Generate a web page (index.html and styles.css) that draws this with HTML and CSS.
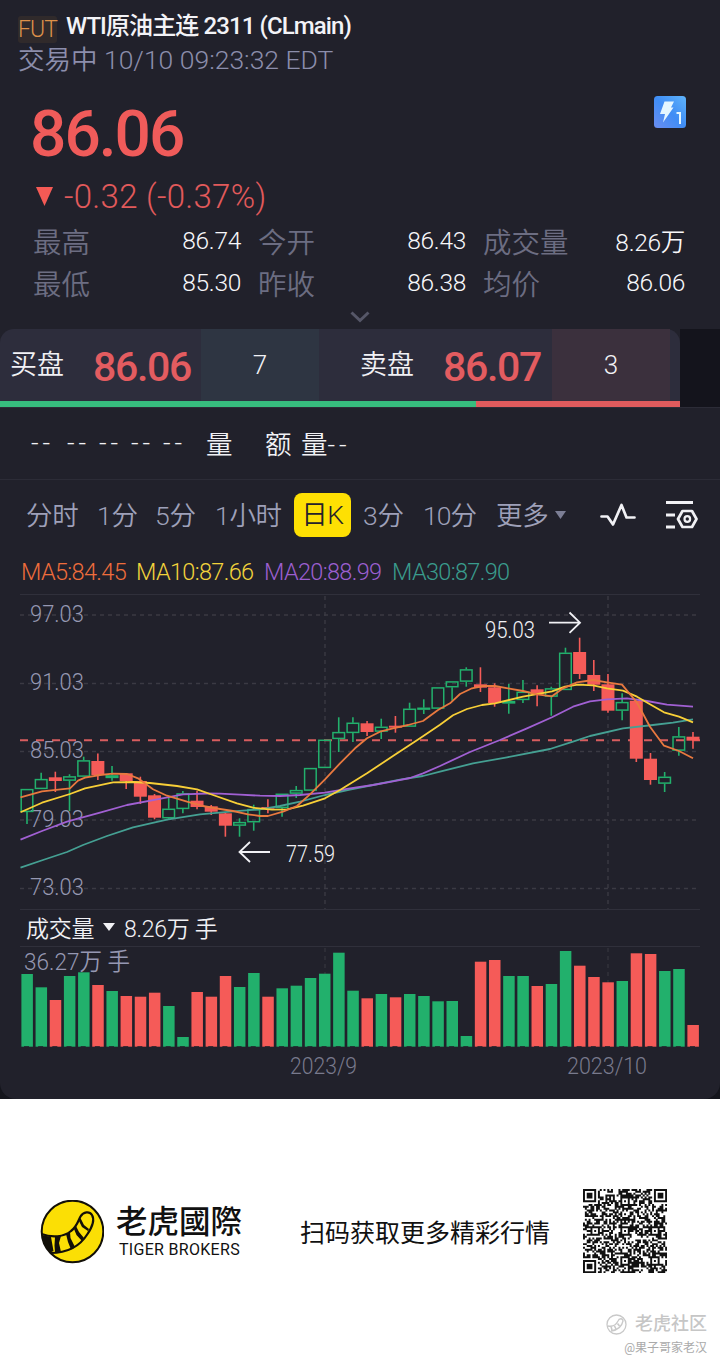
FILE: index.html
```html
<!DOCTYPE html>
<html lang="zh-CN">
<head>
  <meta charset="UTF-8">
  <title>WTI原油主连 2311 (CLmain)</title>
  <link rel="stylesheet" href="styles.css">
</head>
<body>

  <div class="panel-wrap">
  <div class="panel">

    <div class="header">
      <div class="title-row">
        <span class="tag">FUT</span>
        <h1>WTI原油主连 2311 (CLmain)</h1>
      </div>
      <div class="status">交易中 10/10 09:23:32 EDT</div>
    </div>

    <div class="quote">
      <div class="quote-top">
        <div class="price">86.06</div>
        <svg class="level-icon" viewBox="0 0 32 32" width="32" height="32">
          <defs>
            <linearGradient id="lv" x1="0" y1="1" x2="1" y2="0">
              <stop offset="0" stop-color="#6b8df0"/>
              <stop offset="0.5" stop-color="#3f8df5"/>
              <stop offset="1" stop-color="#5fb4fb"/>
            </linearGradient>
          </defs>
          <rect width="32" height="32" rx="3.5" fill="url(#lv)"/>
          <path d="M10.500 5.500h9.500l-3 6h2.500L9 26.500l2-8.500H6z" fill="#e4f6ff"/>
          <path d="M22.500 17H26v11" fill="none" stroke="#e4f6ff" stroke-width="2"/>
        </svg>
      </div>
      <div class="change">
        <svg width="17" height="19" viewBox="0 0 18 20"><path d="M0 0h18L9 20z" fill="#f55a55"/></svg>
        <span>-0.32 (-0.37%)</span>
      </div>
      <div class="stats">
        <div class="stat"><span>最高</span><b>86.74</b></div>
        <div class="stat"><span>今开</span><b>86.43</b></div>
        <div class="stat"><span>成交量</span><b>8.26万</b></div>
        <div class="stat"><span>最低</span><b>85.30</b></div>
        <div class="stat"><span>昨收</span><b>86.38</b></div>
        <div class="stat"><span>均价</span><b>86.06</b></div>
      </div>
      <svg class="chevron" width="20" height="12" viewBox="0 0 20 12"><path d="M1.500 1.500L10 9.500l8.500-8" fill="none" stroke="#565768" stroke-width="3"/></svg>
    </div>

    <div class="depth">
      <div class="book">
        <div class="sides">
          <div class="side bid">
            <span class="side-name">买盘</span>
            <span class="side-price">86.06</span>
            <span class="side-qty">7</span>
          </div>
          <div class="side ask">
            <span class="side-name">卖盘</span>
            <span class="side-price">86.07</span>
            <span class="side-qty">3</span>
          </div>
        </div>
        <div class="ratio"><div class="ratio-bid"></div><div class="ratio-ask"></div></div>
      </div>
    </div>

    <div class="ticks">
      <span class="first dash">--</span><span class="dash">--</span><span class="dash">--</span><span class="dash">--</span><span class="dash">--</span>
      <span class="vol">量</span><span class="amount">额</span><span>量<i class="dash">--</i></span>
    </div>

    <div class="tabs">
      <span class="tab t1">分时</span>
      <span class="tab t2">1分</span>
      <span class="tab t3">5分</span>
      <span class="tab t4">1小时</span>
      <span class="tab active">日K</span>
      <span class="tab t6">3分</span>
      <span class="tab t7">10分</span>
      <span class="tab t8">更多</span>
      <svg class="caret" width="11" height="8" viewBox="0 0 11 8"><path d="M0 0h11L5.500 8z" fill="#7c7e95"/></svg>
      <svg class="wave" width="36" height="26" viewBox="0 0 36 26"><path d="M1.500 14.500h6L13 22.500 21.500 3l5 12.500h8" fill="none" stroke="#f1f1f5" stroke-width="2.700" stroke-linejoin="round" stroke-linecap="round"/></svg>
      <svg class="settings" width="32" height="30" viewBox="0 0 32 30">
        <path d="M0 2.500h27M0 15h9M0 27h9" stroke="#f1f1f5" stroke-width="2.800" fill="none"/>
        <path d="M16.500 11h9.500l4.500 8-4.500 8h-9.500L12 19z" fill="none" stroke="#f1f1f5" stroke-width="2.700" stroke-linejoin="round"/>
        <circle cx="21.300" cy="19" r="2.800" fill="none" stroke="#f1f1f5" stroke-width="2.200"/>
      </svg>
    </div>

    <div class="averages">
      <span class="ma5">MA5:84.45</span>
      <span class="ma10">MA10:87.66</span>
      <span class="ma20">MA20:88.99</span>
      <span class="ma30">MA30:87.90</span>
    </div>

    <svg id="price-chart" class="price-chart" width="680" height="315" viewBox="20 594 680 315"></svg>

    <div class="volume-head">
      <span>成交量</span>
      <svg width="12" height="8" viewBox="0 0 12 8"><path d="M0 0h12L6 8z" fill="#f1f1f5"/></svg>
      <span>8.26万 手</span>
    </div>

    <svg id="volume-chart" class="volume-chart" width="680" height="140" viewBox="20 946 680 140"></svg>

  </div>
  </div>

  <div class="footer">
    <svg class="logo" width="64" height="64" viewBox="0 0 64 64">
      <circle cx="32.500" cy="31.500" r="30.800" fill="#fbdf05" stroke="#120f08" stroke-width="2"/>
      <path d="M1.500 34C12 38 24 37 31 31c6-4.500 7-10 9.500-14.500 3-5 9-5.500 11.500-1.500 3 5-.5 13-4.500 19C40 46 27 53 10.500 53" fill="none" stroke="#120f08" stroke-width="2.200"/>
      <path d="M2 35l9 2 2.500 14-3 1.500Q3 46 2 35zM15 37l6-1-2 7 2 9-6 .5-.5-7zM26 34l4-2 .5 6 4.500 9-4 2.500L28 42zM34 29l2-3 3 6 5 6-2 3-5.500-6zM39 21l1.500-3 3.500 7 5 4-1 2-6-4z" fill="#120f08"/>
    </svg>
    <div class="brand">
      <div class="brand-cn">老虎國際</div>
      <div class="brand-en">TIGER BROKERS</div>
    </div>
    <div class="scan">扫码获取更多精彩行情</div>
    <svg id="qr" class="qr" width="84" height="84" viewBox="0 0 45 45"></svg>
  </div>

  <div class="watermark">
    <div class="wm-top">
      <svg width="21" height="21" viewBox="0 0 21 21" fill="none" stroke="#c9c9c9">
        <circle cx="10.500" cy="10.500" r="9.500" stroke-width="1.300"/>
        <path d="M2 12c5 1 8-1 10-5 1-3 5-3 5 0-1 5-5 9-12 10" stroke-width="1.300"/>
        <path d="M5 12.500l1 3.500M8.500 12l1.500 3M11.500 9.500l2 2.500" stroke-width="1.600"/>
      </svg>
      <span>老虎社区</span>
    </div>
    <div class="wm-user">@果子哥家老汉</div>
  </div>

  <script src="chart.js"></script>
</body>
</html>
```

FILE: styles.css
```css
* {
  margin: 0;
  padding: 0;
  box-sizing: border-box;
}

body {
  width: 720px;
  height: 1364px;
  overflow: hidden;
  position: relative;
  background: #fff;
  font-family: Roboto, 'Noto Sans CJK SC', sans-serif;
  font-weight: 350;
  white-space: nowrap;
}

svg {
  display: block;
  flex: none;
}

.panel-wrap {
  background: #14151c;
}

.panel {
  height: 1099px;
  background: #21212b;
  border-radius: 0 0 16px 16px;
  overflow: hidden;
}

/* header */
.header {
  height: 90px;
  padding: 10px 18px 0;
}

.title-row {
  display: flex;
  align-items: center;
  height: 32px;
}

.tag {
  width: 39px;
  height: 27px;
  margin: 6px 9px 0 0;
  line-height: 28px;
  text-align: center;
  font-size: 23px;
  letter-spacing: -1px;
  color: #dd914a;
  background: #302a2b;
  border-radius: 3px;
}

h1 {
  font-size: 24px;
  line-height: 32px;
  font-weight: 500;
  letter-spacing: -0.9px;
  color: #f3f3f7;
}

.status {
  margin-top: 2px;
  font-size: 26.5px;
  line-height: 32px;
  color: #8c8eac;
}

/* quote */
.quote {
  height: 239px;
  padding: 5px 34px 0 33px;
}

.quote-top {
  display: flex;
  justify-content: space-between;
  height: 80px;
}

.price {
  margin-left: -3px;
  font-size: 64px;
  line-height: 79px;
  font-weight: 500;
  letter-spacing: -2px;
  color: #f05b5a;
}

.level-icon {
  margin-top: 1px;
}

.change {
  display: flex;
  align-items: center;
  gap: 11px;
  height: 43px;
  margin: 0 0 1px 3px;
  font-size: 33px;
  letter-spacing: 0.3px;
  color: #e25a5b;
}

.stats {
  display: grid;
  grid-template-columns: 208px 208px 202px;
  grid-auto-rows: 42px;
  column-gap: 17px;
}

.stat {
  display: flex;
  align-items: center;
  justify-content: space-between;
  color: #6c6d82;
  font-size: 28.5px;
}

.stat b {
  font-size: 24.5px;
  font-weight: 350;
  letter-spacing: -0.3px;
  color: #f8f8fb;
}

.chevron {
  margin: 8px auto 0;
  position: relative;
  left: 0.5px;
}

/* bid and ask */
.depth {
  height: 78px;
  background: #14141c;
}

.book {
  width: 680px;
  height: 78px;
  background: #21212b;
}

.sides {
  display: flex;
  height: 72px;
  background: #2d2d3c;
  border-radius: 14px 14px 0 0;
}

.side {
  display: flex;
  align-items: center;
  line-height: 72px;
}

.bid {
  width: 350px;
  padding-left: 10px;
}

.ask {
  padding-left: 10px;
}

.side-name {
  width: 83px;
  font-size: 27px;
  color: #f1f1f5;
}

.side-price {
  width: 108px;
  padding-top: 4px;
  font-size: 41px;
  font-weight: 500;
  letter-spacing: -1.3px;
  color: #e35c60;
}

.ask .side-price {
  width: 109px;
}

.side-qty {
  width: 118px;
  height: 72px;
  text-align: center;
  font-size: 26px;
  color: #f1f1f5;
  background: #2e3542;
}

.ask .side-qty {
  background: #3b303d;
}

.ratio {
  display: flex;
  height: 6px;
}

.ratio-bid {
  width: 476px;
  background: #37bd7e;
}

.ratio-ask {
  width: 204px;
  background: #e05b5d;
}

/* tick row */
.ticks {
  display: flex;
  align-items: center;
  height: 73px;
  padding: 0 0 3px 31px;
  border-top: 1px solid #2c2c37;
  border-bottom: 1px solid #2c2c37;
  font-size: 26.5px;
  color: #f1f1f5;
}

.dash {
  width: 32px;
  letter-spacing: 4px;
  font-style: normal;
}

.first {
  width: 36px;
}

.vol {
  width: 59px;
  margin-left: 11px;
}

.amount {
  width: 36px;
}

/* period tabs */
.tabs {
  display: flex;
  align-items: center;
  height: 70px;
  padding: 0 22px 0 26px;
  font-size: 26.5px;
  color: #9ea0b9;
}

.tab {
  padding-bottom: 3px;
  letter-spacing: -0.3px;
}

.t1 { width: 71px; }
.t2 { width: 58px; }
.t3 { width: 60px; }
.t4 { width: 79px; }
.t6 { width: 60px; margin-left: 12px; }
.t7 { width: 73px; letter-spacing: -0.9px; }
.t8 { width: 59px; }

.tab.active {
  width: 57px;
  height: 44px;
  line-height: 43px;
  text-align: center;
  color: #25222b;
  background: #fee003;
  border-radius: 8px;
}

.wave {
  margin-left: 34px;
}

.settings {
  margin-left: 30px;
}

/* moving averages */
.averages {
  display: flex;
  height: 44px;
  line-height: 44px;
  padding-left: 21px;
  font-size: 23.5px;
  letter-spacing: -0.65px;
}

.ma5 { width: 115px; color: #ef6d3c; }
.ma10 { width: 128px; color: #f2d33b; }
.ma20 { width: 128px; color: #9c5fd0; }
.ma30 { color: #3a9c8d; }

/* charts */
.price-chart,
.volume-chart {
  margin-left: 20px;
}

.axis {
  font-size: 24px;
  fill: #9698b2;
}

.mark {
  font-size: 23px;
  fill: #f1f1f5;
}

.date {
  font-size: 24px;
  fill: #797a8d;
}

.volume-head {
  display: flex;
  align-items: center;
  gap: 9px;
  height: 37px;
  margin: 0 20px;
  padding: 0 0 2px 6px;
  border-top: 1px solid #30303b;
  font-size: 23px;
  letter-spacing: -0.3px;
  color: #f1f1f5;
}

/* footer */
.footer {
  display: flex;
  align-items: center;
  height: 265px;
  padding-left: 40px;
  color: #111;
}

.brand {
  width: 184px;
  margin-left: 12px;
}

.brand-cn {
  font-size: 31.5px;
  line-height: 36px;
  font-weight: 500;
  margin-top: -4px;
  font-family: 'Noto Sans CJK TC', sans-serif;
}

.brand-en {
  margin: 4px 0 0 3px;
  font-size: 16px;
  line-height: 18px;
  font-weight: 400;
  letter-spacing: 0.3px;
}

.scan {
  width: 283px;
  padding-bottom: 2px;
  font-size: 25px;
  font-weight: 400;
}

.qr {
  margin-bottom: 1px;
}

/* watermark */
.watermark {
  position: absolute;
  right: 13px;
  bottom: 8px;
  display: flex;
  flex-direction: column;
  align-items: flex-end;
  color: #c6c6c6;
}

.wm-top {
  display: flex;
  align-items: center;
  gap: 8px;
  font-size: 18px;
  line-height: 24px;
  font-weight: 500;
}

.wm-user {
  margin-top: 4px;
  font-size: 12px;
  line-height: 16px;
  font-weight: 400;
  color: #aaa;
}
```

FILE: chart.js
```js
const GREEN = "#22b06c";
const RED = "#f55b58";
const STEP = 14.17;
const FIRST = 27;

// [direction, body top, body bottom, high, low, volume top]
const bars = [
  ["g", 789, 812, 789, 824, 974],
  ["g", 779, 789, 772.7, 789, 987.3],
  ["r", 777.3, 781, 771.7, 792, 1000],
  ["g", 776.3, 780.7, 774.3, 811, 976],
  ["g", 760.3, 776.7, 756.7, 776.7, 972.3],
  ["r", 761, 775, 753.5, 780, 985],
  ["g", 775.3, 778, 766, 780.7, 991],
  ["r", 773.3, 781, 773.3, 789, 996],
  ["r", 781, 796.7, 776.7, 804, 996.7],
  ["r", 795.3, 817.7, 794, 819.3, 992.7],
  ["g", 808.7, 818.3, 796.7, 820, 1006],
  ["g", 793.3, 809, 791, 813.3, 1037],
  ["r", 800.7, 807, 790.7, 809.3, 992],
  ["r", 806.3, 811.7, 805, 815, 996.7],
  ["r", 813.3, 825.7, 813, 836.7, 976],
  ["g", 822, 825.7, 818.3, 836.7, 987],
  ["g", 809, 822.3, 804.7, 830.7, 973],
  ["r", 807, 808.7, 799.3, 813.3, 996.7],
  ["g", 793.7, 808, 793.7, 816.7, 988.3],
  ["g", 790, 793.7, 786, 798, 985.7],
  ["g", 768, 790.7, 768, 790.7, 978],
  ["g", 739.7, 768, 739.7, 768, 973.7],
  ["g", 732, 739, 717.3, 752, 952.7],
  ["g", 722.7, 733, 717.3, 742, 990.7],
  ["r", 723.3, 732, 721, 736, 998.3],
  ["g", 726.7, 731.7, 718.7, 739, 994],
  ["r", 725.7, 727.7, 716, 732.7, 997.3],
  ["g", 708.7, 726.7, 702.7, 726.7, 994],
  ["g", 707.7, 709.7, 699.3, 714, 996],
  ["g", 687.3, 708.7, 687.3, 708.7, 1001.3],
  ["g", 681.3, 687.3, 681.3, 700.7, 1001],
  ["g", 669.3, 681.7, 667.3, 686.7, 1036],
  ["r", 684.3, 687.7, 667.3, 692, 961.7],
  ["r", 687.3, 703, 683.3, 706.7, 960],
  ["g", 701, 703.5, 684, 713.7, 976],
  ["g", 691.7, 700, 680, 703, 976],
  ["r", 689.3, 694.3, 685.3, 706.3, 986],
  ["g", 688.3, 696.7, 686.7, 715.7, 984],
  ["g", 652.7, 690, 647.7, 690, 951],
  ["r", 652, 674, 637.7, 679, 965.7],
  ["r", 675, 684.7, 660, 691, 977],
  ["r", 684.3, 710.7, 674, 712.7, 982.3],
  ["g", 702, 710.7, 693.3, 720.3, 981],
  ["r", 700.7, 758.7, 700.7, 762, 953.3],
  ["r", 758.7, 780, 753, 784.7, 954],
  ["g", 776.7, 783.7, 772, 792, 971],
  ["g", 736.3, 750.7, 727, 755.7, 969],
  ["r", 736.7, 740.7, 732, 748.7, 1025]
];

const averages = [
  ["#45a093", [20.5,867.7, 43,860, 67,852, 83,845, 107,836, 133,827.3, 167,819.7, 200,814.3, 233,811.3, 260,809.3, 280,806, 300,801.7, 325,795, 350,789.7, 373,785, 400,779.7, 423,776, 440,771.7, 473,763.3, 507,757.3, 550,749, 573,741.7, 590,736, 623,728.3, 653,725, 673,722.7, 693,719.3]],
  ["#a160d3", [20.5,839.7, 42,831, 67,821.7, 100,812.7, 127,805, 157,799.3, 183,794.3, 207,793.5, 220,793.7, 240,794.7, 260,795.7, 280,796, 300,795, 325,792.7, 350,788.3, 373,785, 393,781.3, 410,778, 423,773.3, 440,766, 470,752, 500,740, 527,728.3, 552,717.3, 573,706.7, 590,701.3, 607,699.3, 627,698.3, 647,701, 667,704.7, 693,706.7]],
  ["#f8cf37", [20.5,812.3, 42,802.7, 70,794, 85,788.3, 113,782.3, 133,782, 150,783, 177,786, 197,789.3, 213,795, 237,803.3, 253,807.7, 272,809.7, 287,809.3, 303,805.7, 325,798.3, 340,790, 367,773.3, 393,756, 420,738.3, 440,724.7, 453,715.3, 467,709, 482,705, 495,703.3, 523,696.7, 552,691.3, 565,686.7, 578,684.7, 593,685.3, 607,688.3, 623,690.7, 637,696.7, 653,706, 664,712.3, 679,716.7, 693,722.3]],
  ["#e9793f", [20.5,797.3, 42,791.3, 70,788.3, 78,780.7, 85,777.7, 100,775, 113,773.7, 127,774, 138,778.3, 153,789.3, 167,795.7, 187,801.7, 203,806, 220,809, 233,811, 248,814.3, 260,816, 268,816, 283,811.7, 297,806, 310,794.3, 325,779.3, 340,763.3, 355,748.3, 367,738.3, 380,731.7, 393,728.3, 408,725, 423,721, 438,710, 450,703.3, 460,694, 472,688.3, 483,686, 495,686, 508,688.3, 523,691, 537,694.3, 552,696.3, 563,688.3, 577,682.3, 593,680, 607,682.3, 622,684.7, 637,702.7, 650,726.7, 664,745.7, 679,751, 693,758.3]]
];

const line = (x1, y1, x2, y2, color, extra = "") =>
  `<line x1="${x1}" y1="${y1}" x2="${x2}" y2="${y2}" stroke="${color}" ${extra}/>`;

function drawPrices() {
  let out = line(20, 594.5, 700, 594.5, "#30303b");
  const levels = [["97.03", 615], ["91.03", 683.5], ["85.03", 751.5], ["79.03", 820], ["73.03", 888.5]];
  const grid = 'stroke-width="1.4" stroke-dasharray="4 4"';

  levels.forEach(([, y]) => {
    out += line(20, y, 700, y, "#3b3a43", grid);
  });
  [325, 608].forEach(x => {
    out += line(x, 596, x, 909, "#3b3a43", grid);
  });
  out += line(20, 740.3, 700, 740.3, "#d85d5f", 'stroke-width="2" stroke-dasharray="8 8"');
  levels.forEach(([label, y]) => {
    out += `<text class="axis" x="30" y="${y + 6.5}" textLength="54" lengthAdjust="spacingAndGlyphs">${label}</text>`;
  });

  bars.forEach(([dir, top, bottom, high, low], i) => {
    const x = FIRST + i * STEP;
    if (dir === "r") {
      out += line(x, high, x, low, RED, 'stroke-width="1.6"');
      out += `<rect x="${x - 6.5}" y="${top}" width="13" height="${bottom - top}" fill="${RED}"/>`;
    } else {
      out += line(x, high, x, top, GREEN, 'stroke-width="1.6"');
      out += line(x, bottom, x, low, GREEN, 'stroke-width="1.6"');
      out += `<rect x="${x - 5.8}" y="${top + .6}" width="11.600" height="${Math.max(bottom - top - 1.2, .6)}" fill="none" stroke="${GREEN}" stroke-width="1.5"/>`;
    }
  });

  averages.forEach(([color, points]) => {
    out += `<polyline points="${points.join(" ")}" fill="none" stroke="${color}" stroke-width="1.8" stroke-linejoin="round"/>`;
  });

  out += '<g fill="none" stroke="#f1f1f5" stroke-width="1.8">';
  out += '<path d="M549 622.700h31M569.500 612.500l10.500 10.200-10.500 10.200"/>';
  out += '<path d="M270 852h-30M250 842l-10.500 10 10.500 10"/></g>';
  out += '<text class="mark" x="485" y="638" textLength="50" lengthAdjust="spacingAndGlyphs">95.03</text>';
  out += '<text class="mark" x="286" y="862" textLength="49" lengthAdjust="spacingAndGlyphs">77.59</text>';
  document.getElementById("price-chart").innerHTML = out;
}

function drawVolumes() {
  let out = line(20, 946.5, 700, 946.5, "#30303b");
  [325, 608].forEach(x => {
    out += line(x, 948, x, 1046, "#3b3a43", 'stroke-dasharray="4 4"');
  });
  out += '<text class="axis" x="24" y="970" textLength="106" lengthAdjust="spacingAndGlyphs">36.27万 手</text>';
  bars.forEach(([dir, , , , , top], i) => {
    const x = FIRST + i * STEP - 5.6;
    out += `<rect x="${x}" y="${top}" width="11.500" height="${1046.7 - top}" fill="${dir === "g" ? GREEN : RED}"/>`;
  });
  out += line(24, 1046.5, 700, 1046.5, "#21212b", 'stroke-width=".8" stroke-dasharray="5 9.170"');
  out += '<text class="date" x="290" y="1074" textLength="67" lengthAdjust="spacingAndGlyphs">2023/9</text>';
  out += '<text class="date" x="567" y="1074" textLength="80" lengthAdjust="spacingAndGlyphs">2023/10</text>';
  document.getElementById("volume-chart").innerHTML = out;
}

function drawCode() {
  const size = 45;
  const cells = [];
  let seed = 2311;
  for (let i = 0; i < size * size; i++) {
    seed = (seed * 1103515245 + 12345) % 2147483648;
    cells.push(seed / 2147483648 < 0.52);
  }
  // concentric squares: dark, light, dark
  const square = (cx, cy, r) => {
    for (let y = -r; y <= r; y++) {
      for (let x = -r; x <= r; x++) {
        const px = cx + x, py = cy + y;
        if (px < 0 || py < 0 || px >= size || py >= size) continue;
        const d = Math.max(Math.abs(x), Math.abs(y));
        cells[py * size + px] = r === 4 ? d === 3 || d < 2 : d !== 1;
      }
    }
  };
  [[3, 3], [41, 3], [3, 41]].forEach(([x, y]) => square(x, y, 4));
  [[22, 6], [6, 22], [22, 22], [38, 22], [22, 38], [38, 38]].forEach(([x, y]) => square(x, y, 2));

  let path = "";
  cells.forEach((on, i) => {
    if (on) path += `M${i % size} ${Math.floor(i / size)}h1.050v1.050h-1.050z`;
  });
  document.getElementById("qr").innerHTML = `<path d="${path}" fill="#111"/>`;
}

drawPrices();
drawVolumes();
drawCode();
```
